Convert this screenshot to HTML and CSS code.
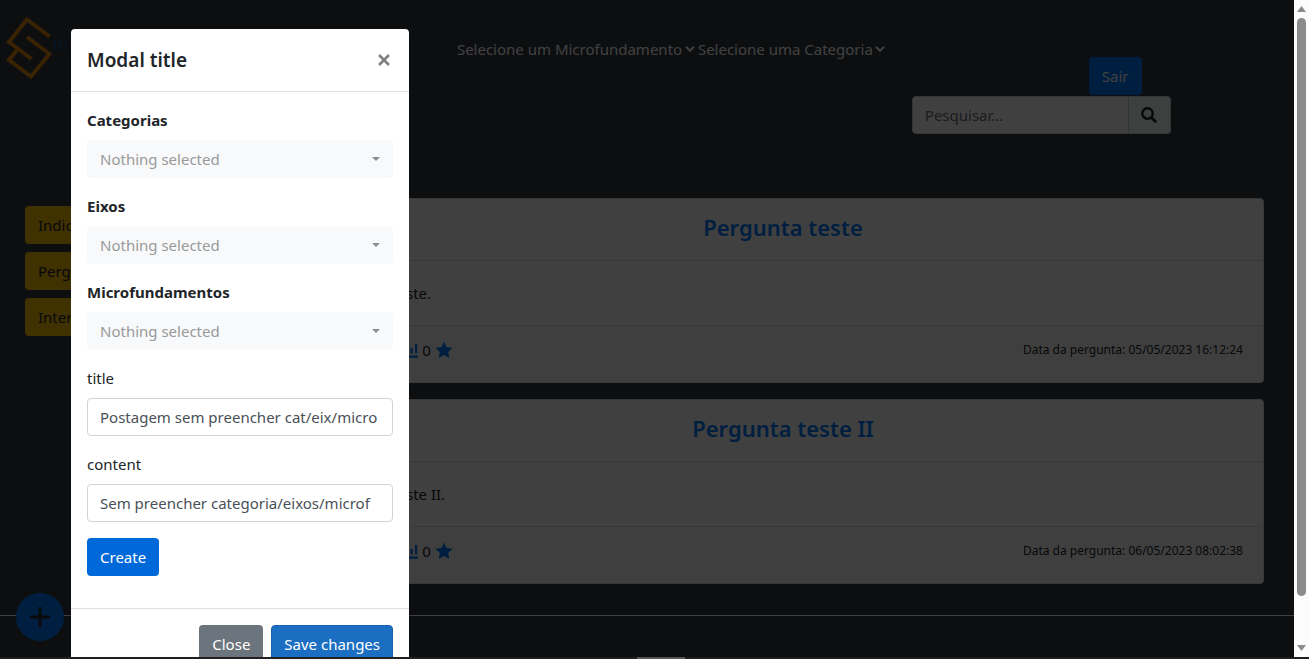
FILE: index.html
```html
<!DOCTYPE html>
<html lang="pt-BR">
<head>
<meta charset="utf-8">
<title>Perguntas</title>
<link rel="stylesheet" href="styles.css">
</head>
<body>
<svg class="sprite" aria-hidden="true">
  <symbol id="chevron" viewBox="0 0 10 8"><path d="M1 1.8 5 5.8 9 1.8" fill="none" stroke="currentColor" stroke-width="2"/></symbol>
  <symbol id="chart" viewBox="0 0 18 18"><path d="M0 14.500h18v2.200H0zM2 7h2.200v5.500H2zM6 3h2.200v9.500H6zM10.500 7h2.200v5.500h-2.200zM15 3h2.200v9.500H15z" fill="currentColor"/></symbol>
  <symbol id="star" viewBox="0 0 18 18"><path d="M9 .6 11.500 5.900 17.600 6.700 13.200 10.900 14.300 17 9 14.100 3.700 17 4.800 10.900.4 6.700 6.500 5.900z" fill="currentColor"/></symbol>
  <symbol id="up" viewBox="0 0 18 18"><path d="M9 2 16 10h-4v6H6v-6H2z" fill="currentColor"/></symbol>
  <symbol id="down" viewBox="0 0 18 18"><path d="M9 16 2 8h4V2h6v6h4z" fill="currentColor"/></symbol>
</svg>
<div class="window">
  <div class="page">
    <header class="topbar">
      <a class="brand" href="#" aria-label="Início">
        <svg class="logo" viewBox="0 0 46 64" aria-hidden="true"><path d="M43.500 20.500 21 3.500 3 26l22.500 17M21 21l22.500 17L25 60.500 3 44l8-10" fill="none" stroke="#e78b0c" stroke-width="4"/></svg>
        <span class="brand-name">TU</span>
      </a>
      <nav class="filters">
        <label class="filter"><select aria-label="Microfundamento"><option>Selecione um Microfundamento</option></select><svg class="chevron"><use href="#chevron"/></svg></label>
        <label class="filter"><select aria-label="Categoria"><option>Selecione uma Categoria</option></select><svg class="chevron"><use href="#chevron"/></svg></label>
      </nav>
      <div class="account">
        <button class="btn btn-primary logout" type="button">Sair</button>
        <form class="search">
          <input type="search" placeholder="Pesquisar..." aria-label="Pesquisar">
          <button type="button" aria-label="Buscar"><svg width="16" height="16" viewBox="0 0 16 16"><circle cx="6.500" cy="6.500" r="5.200" fill="none" stroke="currentColor" stroke-width="2.500"/><path d="m10.200 10.200 5 5" stroke="currentColor" stroke-width="3"/></svg></button>
        </form>
      </div>
    </header>
    <div class="content">
      <aside class="side">
        <button class="btn btn-warning" type="button">Indicadores</button>
        <button class="btn btn-warning" type="button">Perguntas</button>
        <button class="btn btn-warning" type="button">Interesses</button>
      </aside>
      <main class="cards">
        <article class="card">
          <h2 class="card-head"><a href="#">Pergunta teste</a></h2>
          <p class="card-body">Pergunta teste.</p>
          <footer class="card-foot">
            <div class="stats"><svg><use href="#up"/></svg>0 <svg><use href="#down"/></svg>0 <svg><use href="#chart"/></svg>0 <svg><use href="#star"/></svg></div>
            <small>Data da pergunta: 05/05/2023 16:12:24</small>
          </footer>
        </article>
        <article class="card">
          <h2 class="card-head"><a href="#">Pergunta teste II</a></h2>
          <p class="card-body">Pergunta teste II.</p>
          <footer class="card-foot">
            <div class="stats"><svg><use href="#up"/></svg>0 <svg><use href="#down"/></svg>0 <svg><use href="#chart"/></svg>0 <svg><use href="#star"/></svg></div>
            <small>Data da pergunta: 06/05/2023 08:02:38</small>
          </footer>
        </article>
      </main>
    </div>
    <hr class="rule">
    <button class="fab" type="button" aria-label="Nova pergunta"><svg width="20" height="20" viewBox="0 0 20 20"><path d="M10 0v20M0 10h20" stroke="currentColor" stroke-width="3"/></svg></button>
    <div class="backdrop"></div>
    <section class="modal" role="dialog" aria-labelledby="modal-title">
      <header class="modal-head">
        <h1 id="modal-title">Modal title</h1>
        <button class="close" type="button" aria-label="Fechar"><svg width="12" height="12" viewBox="0 0 12 12"><path d="m1 1 10 10M11 1 1 11" stroke="currentColor" stroke-width="2.500"/></svg></button>
      </header>
      <form class="modal-body">
        <div class="field"><label class="strong" for="cat">Categorias</label><div class="picker"><select id="cat"><option>Nothing selected</option></select></div></div>
        <div class="field"><label class="strong" for="eix">Eixos</label><div class="picker"><select id="eix"><option>Nothing selected</option></select></div></div>
        <div class="field"><label class="strong" for="mic">Microfundamentos</label><div class="picker"><select id="mic"><option>Nothing selected</option></select></div></div>
        <div class="field"><label for="title">title</label><input id="title" type="text" value="Postagem sem preencher cat/eix/micro"></div>
        <div class="field"><label for="text">content</label><input id="text" type="text" value="Sem preencher categoria/eixos/microf"></div>
        <button class="btn btn-create" type="button">Create</button>
      </form>
      <footer class="modal-foot">
        <button class="btn btn-secondary" type="button">Close</button>
        <button class="btn btn-save" type="button">Save changes</button>
      </footer>
    </section>
  </div>
  <div class="scrollbar" aria-hidden="true">
    <svg width="9" height="6" viewBox="0 0 9 6"><path d="M0 6 4.500 0 9 6z" fill="#8b8b8b"/></svg>
    <div class="track"><div class="thumb"></div></div>
    <svg width="9" height="6" viewBox="0 0 9 6"><path d="M0 0h9L4.500 6z" fill="#8b8b8b"/></svg>
  </div>
</div>
<div class="edge"></div>
</body>
</html>
```
FILE: styles.css
```css
* { box-sizing: border-box; }
body {
  margin: 0;
  height: 100vh;
  display: flex;
  flex-direction: column;
  overflow: hidden;
  font: 15px/24px "Noto Sans", "Open Sans", sans-serif;
  color: #212529;
}
button, input, select { font: inherit; color: inherit; margin: 0; }
a { text-decoration: none; color: #007bff; }
h1, h2, p { margin: 0; }
.sprite { position: absolute; width: 0; height: 0; }

.window { flex: 1; min-height: 0; display: flex; }
.page { flex: 1; min-width: 0; position: relative; overflow: hidden; background: #343a40; }
.edge { height: 2px; background: linear-gradient(#555, #555) 50.5% 0 / 48px 2px no-repeat #202020; }

.btn {
  height: 38px;
  padding: 0 12px;
  border: 1px solid transparent;
  border-radius: 4px;
  color: #fff;
  white-space: nowrap;
}
.btn-primary { background: #007bff; }
.btn-warning { background: #ffc107; color: #212529; text-align: left; }
.btn-create { background: #0069d9; }
.btn-secondary { background: #6c757d; }
.btn-save { background: #1b6ec2; border-color: #1861ac; }

.topbar { display: grid; grid-template-columns: 35% 1fr 30%; align-items: start; padding-top: 16px; }
.brand { display: flex; align-items: center; padding-left: 6px; }
.logo { width: 46px; height: 64px; }
.brand-name { padding-bottom: 4px; font-size: 12px; line-height: 16px; color: #0b5cb0; }
.filters { display: flex; gap: 3px; padding: 21px 0 0 4px; color: #fff; }
.filter { display: flex; align-items: center; gap: 2px; white-space: nowrap; }
.filter select { appearance: none; border: 0; padding: 0; background: none; height: 24px; }
.chevron { width: 10px; height: 8px; }
.account { display: flex; flex-direction: column; align-items: flex-start; padding: 41px 0 0 6px; gap: 1px; }
.logout { margin-left: 177px; }
.search { display: flex; width: 259px; max-width: 100%; height: 38px; }
.search input {
  flex: 1;
  min-width: 0;
  padding: 0 12px;
  border: 1px solid #ced4da;
  border-radius: 4px 0 0 4px;
  background: #fff;
}
.search input::placeholder { color: #6c757d; }
.search button {
  display: grid;
  place-items: center;
  width: 42px;
  padding: 0;
  border: 1px solid #ced4da;
  border-left: 0;
  border-radius: 0 4px 4px 0;
  background: #f8f9fa;
}

.content { display: flex; padding: 64px 30px 0 25px; }
.side { width: 277px; padding-top: 8px; display: flex; flex-direction: column; align-items: flex-start; gap: 8px; }
.cards { flex: 1; display: flex; flex-direction: column; gap: 16px; }
.card { background: #fff; border: 1px solid #dfdfdf; border-radius: 4px; }
.card-head { padding: 12px 20px 17px; font-size: 22px; line-height: 32px; font-weight: 600; text-align: center; border-bottom: 1px solid #dfdfdf; }
.card-body { padding: 20px; }
.card-foot { display: flex; justify-content: space-between; padding: 12px 20px 20px; border-top: 1px solid #dfdfdf; background: #fcfcfc; }
.stats { display: flex; align-items: center; gap: 4px; padding-left: 8px; }
.stats svg { width: 18px; height: 18px; color: #007bff; }
.card-foot small { font-size: 12px; line-height: 24px; }
.rule { margin: 31px 0 0; border: 0; border-top: 1px solid #fff; }
.fab {
  position: absolute;
  left: 16px;
  bottom: 16px;
  width: 48px;
  height: 48px;
  padding: 0;
  border: 0;
  border-radius: 50%;
  background: #007bff;
  display: grid;
  place-items: center;
}
.backdrop { position: absolute; inset: 0; background: rgba(0, 0, 0, .75); }

.modal { position: absolute; left: 71px; top: 29px; width: 338px; background: #fff; border-radius: 4px; }
.modal-head { display: flex; justify-content: space-between; align-items: center; padding: 16px; border-bottom: 1px solid #dee2e6; }
.modal-head h1 { font-size: 19px; line-height: 30px; font-weight: 600; }
.close { display: flex; padding: 3px; border: 0; background: none; color: #7f7f7f; }
.modal-body { padding: 16px 16px 32px; }
.field { display: flex; flex-direction: column; gap: 8px; margin-bottom: 16px; }
.strong { font-weight: 700; }
.field input, .picker select { width: 100%; height: 38px; padding: 0 12px; border-radius: 4px; }
.field input { border: 1px solid #ced4da; background: #fff; color: #495057; }
.picker { position: relative; }
.picker select { appearance: none; border: 1px solid #f8f9fa; background: #f8f9fa; color: #999; }
.picker::after {
  content: "";
  position: absolute;
  right: 13px;
  top: 17px;
  border: 4px solid transparent;
  border-top-color: #8a8c8e;
  border-bottom: 0;
  pointer-events: none;
}
.modal-foot { display: flex; justify-content: flex-end; gap: 8px; padding: 16px; border-top: 1px solid #dee2e6; }

.scrollbar { width: 15px; padding: 6px 0; background: #fcfcfc; display: flex; flex-direction: column; align-items: center; gap: 6px; }
.track { flex: 1; width: 9px; }
.thumb { height: 93%; border-radius: 5px; background: #8b8b8b; }
```
